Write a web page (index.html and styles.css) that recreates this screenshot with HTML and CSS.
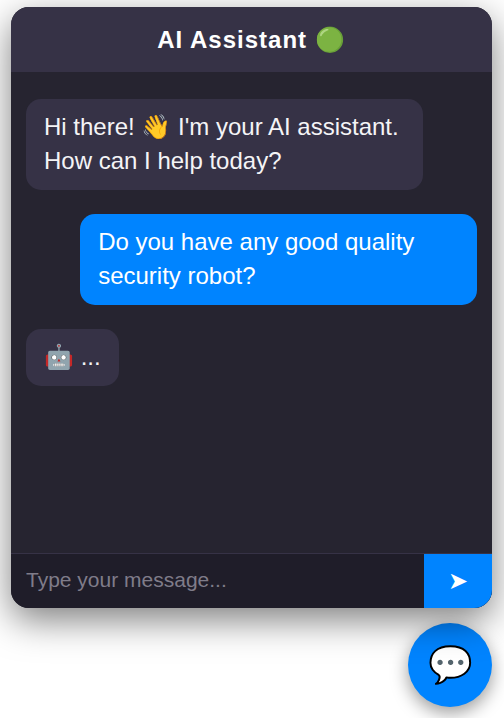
FILE: index.html
```html
<!DOCTYPE html>
<html lang="en">
<head>
<meta charset="utf-8">
<title>AI Assistant</title>
<link rel="stylesheet" href="styles.css">
</head>
<body>
<main class="widget">
  <section class="chat">
    <header class="chat-header">AI Assistant 🟢</header>
    <div class="messages">
      <p class="message bot">Hi there! 👋 I'm your AI assistant. How can I help today?</p>
      <p class="message user">Do you have any good quality security robot?</p>
      <p class="message bot">🤖 ...</p>
    </div>
    <form class="composer">
      <input class="composer-input" type="text" placeholder="Type your message..." aria-label="Message">
      <button class="composer-send" type="button" aria-label="Send">➤</button>
    </form>
  </section>
  <button class="launcher" type="button" aria-label="Toggle chat">💬</button>
</main>
</body>
</html>
```
FILE: styles.css
```css
* { box-sizing: border-box; }
body {
  margin: 0;
  background: #fff;
  font-family: "Liberation Sans", Arial, sans-serif;
}
.widget {
  min-height: 100vh;
  display: flex;
  flex-direction: column;
  align-items: flex-end;
  gap: 15px;
  padding: 7px 12px 11px 11px;
}
.chat {
  z-index: 1;
  width: 100%;
  flex: 1;
  display: flex;
  flex-direction: column;
  overflow: hidden;
  border-radius: 18px;
  background: #262430;
  box-shadow: 0 12px 36px rgba(0, 0, 0, 0.5);
}
.chat-header {
  padding: 18px;
  background: #363246;
  color: #fff;
  font-size: 24px;
  line-height: 29px;
  font-weight: 700;
  letter-spacing: 1px;
  text-align: center;
}
.messages {
  flex: 1;
  display: flex;
  flex-direction: column;
  gap: 24px;
  padding: 27px 15px;
}
.message {
  max-width: 88%;
  margin: 0;
  padding: 11px 18px 12px;
  border-radius: 15px;
  color: #fff;
  font-size: 24px;
  line-height: 34px;
}
.bot { align-self: flex-start; background: #363246; color: #f4f4f6; }
.user { align-self: flex-end; background: #0084ff; }
.composer {
  display: flex;
  border-top: 1px solid #363246;
  background: #1f1d29;
}
.composer-input {
  flex: 1;
  min-width: 0;
  padding: 14px 15px 16px;
  border: 0;
  outline: 0;
  background: transparent;
  color: #fff;
  font: 21px/24px "Liberation Sans", Arial, sans-serif;
}
.composer-input::placeholder { color: #7f7c89; }
.composer-send {
  width: 68px;
  padding: 0;
  border: 0;
  background: #0084ff;
  color: #fff;
  font-size: 24px;
}
.launcher {
  width: 84px;
  height: 84px;
  padding: 0;
  border: 0;
  border-radius: 50%;
  background: #0084ff;
  color: #fff;
  font-size: 36px;
  box-shadow: 0 6px 18px rgba(0, 0, 0, 0.4);
}
```
